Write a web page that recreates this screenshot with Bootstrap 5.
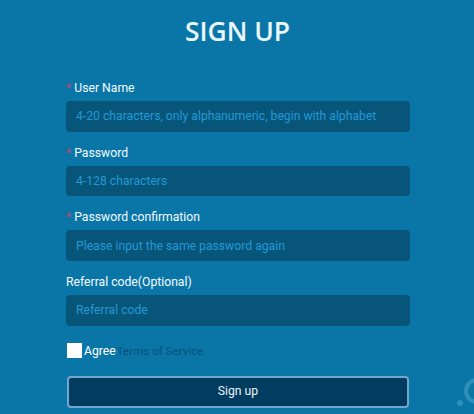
<!DOCTYPE html>
<html lang="en">
<head>
<meta charset="utf-8">
<title>Sign up</title>
<link rel="stylesheet" href="https://cdn.jsdelivr.net/npm/bootstrap@5.3.0/dist/css/bootstrap.min.css">
<style>
html,body{height:100%}
body{background:#0a76a8;font-family:"Roboto","Noto Sans",sans-serif;overflow:hidden;position:relative;color:#fff}
.su-wrap{width:344px;margin-left:66px}
.su-title{font-family:"Open Sans",sans-serif;font-size:26.4px;line-height:32px;font-weight:600;color:#eaf6fc;text-align:center;margin:15px 0 31px;padding-right:1px}
.su-field{margin-bottom:11.2px}
.su-label{display:block;font-size:12.2px;line-height:20px;margin-bottom:3px;color:#f2fafd}
.su-star{color:#b5476f;margin-right:3px}
.su-input.form-control{background:#075579;border:0;border-radius:4px;height:30.5px;padding:0 10px;font-size:12.2px;color:#2299d6;box-shadow:none}
.su-input.form-control::placeholder{color:#2299d6;opacity:1}
.su-check{display:flex;align-items:center;margin:17px 0 17px 1px;font-size:12.2px;line-height:16px}
.su-box{appearance:none;width:15px;height:15px;background:#fff;border:0;margin:0 2px 0 0;flex:none}
.su-terms{color:#08517f;text-decoration:none;margin-left:1px;font-size:11.6px}
.su-btn.btn{display:block;width:342px;margin-left:1px;height:32px;padding:0;background:#023c60;border:2px solid #6fa8c8;border-radius:4px;color:#e8f3f8;font-size:12.2px}
.su-deco{position:absolute;left:456px;top:374px;width:18px;height:40px}
</style>
</head>
<body>
<main class="su-wrap">
  <h1 class="su-title">SIGN UP</h1>
  <form>
    <div class="su-field">
      <label class="su-label" for="u"><span class="su-star">*</span>User Name</label>
      <input class="form-control su-input" id="u" placeholder="4-20 characters, only alphanumeric, begin with alphabet">
    </div>
    <div class="su-field">
      <label class="su-label" for="p"><span class="su-star">*</span>Password</label>
      <input class="form-control su-input" id="p" placeholder="4-128 characters">
    </div>
    <div class="su-field">
      <label class="su-label" for="c"><span class="su-star">*</span>Password confirmation</label>
      <input class="form-control su-input" id="c" placeholder="Please input the same password again">
    </div>
    <div class="su-field">
      <label class="su-label" for="r">Referral code(Optional)</label>
      <input class="form-control su-input" id="r" placeholder="Referral code">
    </div>
    <div class="su-check">
      <input class="su-box" type="checkbox" id="a">
      <label for="a">Agree</label><a class="su-terms" href="#">Terms of Service</a>
    </div>
    <button class="btn su-btn" type="button">Sign up</button>
  </form>
</main>
<svg class="su-deco" viewBox="0 0 18 40" aria-hidden="true"><circle cx="21" cy="17" r="11" fill="none" stroke="#2f8fbb" stroke-width="4"/><circle cx="4" cy="29" r="3" fill="#2f8fbb"/></svg>
</body>
</html>
